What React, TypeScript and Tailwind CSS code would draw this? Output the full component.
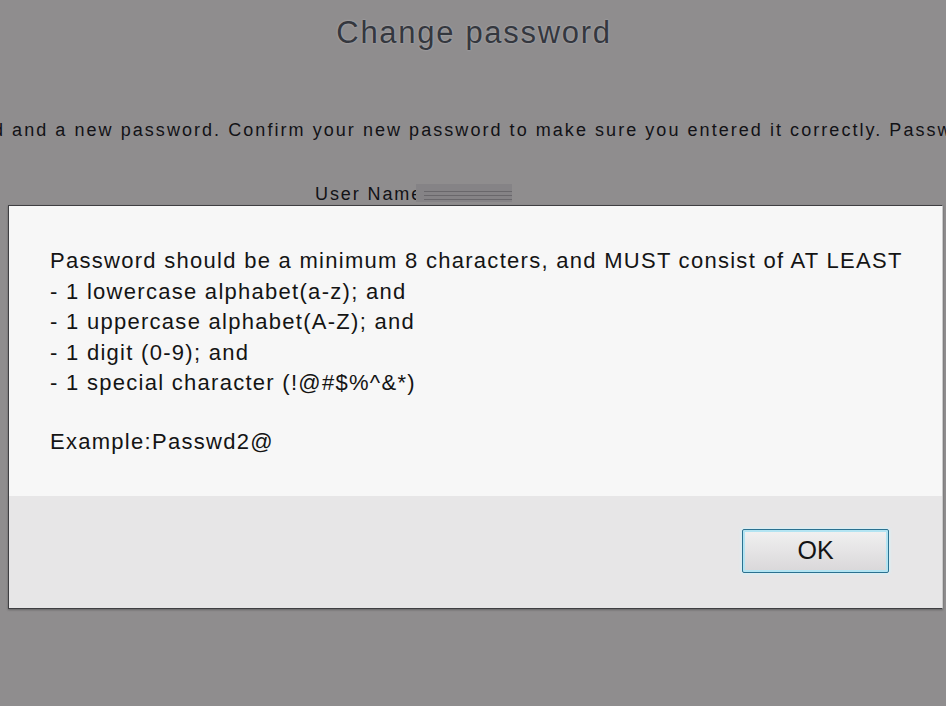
export default function App() {
    return (
        <div className="relative w-[946px] h-[706px] overflow-hidden bg-[#8f8d8e] font-['Liberation_Sans',Arial,sans-serif]">
            {/* page behind the modal */}
            <div className="pt-[14px] flex flex-col">
                <h1 className="text-center text-[31px] leading-[38px] text-[#34373e] tracking-[1.7px] pl-[2px] [text-shadow:0_0_2px_#b9b9bd]">
                    Change password
                </h1>
                <p className="mt-[67px] -ml-[7px] whitespace-nowrap text-[18px] leading-[22px] tracking-[2.05px] text-[#121216]">
                    d and a new password. Confirm your new password to make sure you entered it correctly. Password is case sensitive.
                </p>
                <div className="mt-[42px] ml-[315px]">
                    <span className="text-[18px] leading-[22px] tracking-[1.9px] text-[#121216]">User Name</span>
                </div>
            </div>
            <div className="absolute left-[416px] top-[184px] w-[96px] h-[18px] bg-[#858386] flex flex-col justify-end gap-[3px] pb-[2px] pl-[8px]">
                <div className="h-[1px] bg-[#69676b]" />
                <div className="h-[1px] bg-[#69676b]" />
                <div className="h-[1px] bg-[#69676b]" />
            </div>

            {/* modal */}
            <div className="absolute left-[8px] top-[205px] w-[935px] h-[404px] flex flex-col border border-[#3f3f42] border-r-[#c9c9c9] bg-[#f7f7f7] shadow-[0_1px_2px_rgba(0,0,0,0.3)]">
                <div className="flex-1 pl-[41px] pt-[40px] text-[22px] leading-[30.5px] tracking-[1.28px] text-[#141414]">
                    <p>Password should be a minimum 8 characters, and MUST consist of AT LEAST</p>
                    <p>- 1 lowercase alphabet(a-z); and</p>
                    <p>- 1 uppercase alphabet(A-Z); and</p>
                    <p>- 1 digit (0-9); and</p>
                    <p>- 1 special character (!@#$%^&amp;*)</p>
                    <p className="mt-[28px]">Example:Passwd2@</p>
                </div>
                <div className="h-[112px] shrink-0 bg-[#e7e6e7] flex items-center justify-end pr-[53px] pb-[3px]">
                    <button className="w-[147px] h-[44px] rounded-[2px] border border-[#2b7190] bg-gradient-to-b from-[#f1f1f1] to-[#d9d7d9] shadow-[inset_0_0_0_2px_#b3e4f2,0_0_3px_1px_#d6f1f8] text-[25px] leading-none text-[#141414]">
                        OK
                    </button>
                </div>
            </div>
        </div>
    );
}
